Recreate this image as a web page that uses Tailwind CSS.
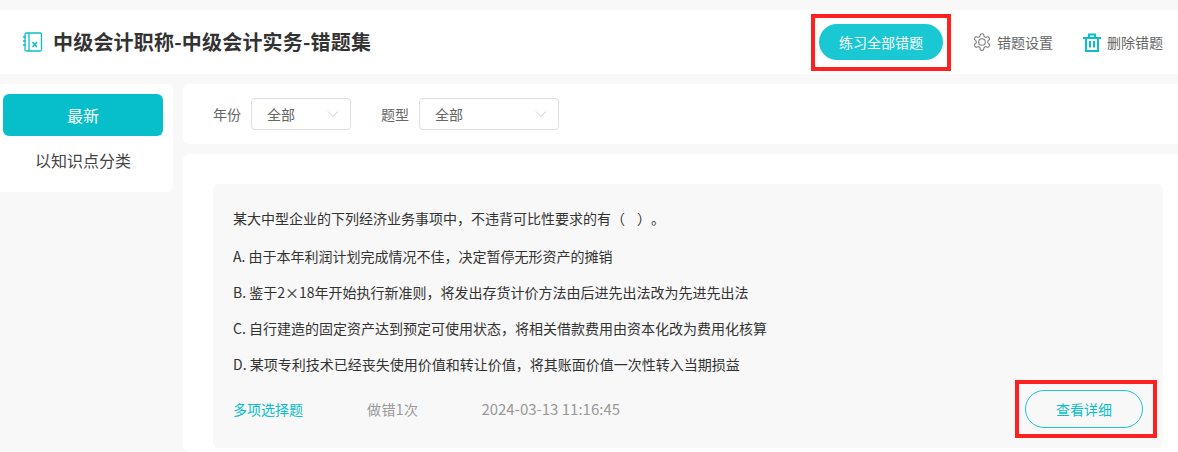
<!DOCTYPE html>
<html lang="zh">
<head>
<meta charset="utf-8">
<script src="https://cdn.jsdelivr.net/npm/@tailwindcss/browser@4"></script>
</head>
<body class="w-[1178px] h-[452px] overflow-hidden bg-[#f8f8f8] font-['Noto_Sans_CJK_SC','Noto_Sans',sans-serif] text-[#333] [text-spacing-trim:space-all]">
<div class="pt-[10px]">
  <header class="h-16 bg-white flex items-center pl-[23px] pr-[15px]">
    <svg class="w-5 h-5 text-[#0bbfca]" viewBox="0 0 20 20" fill="none" stroke="currentColor" stroke-width="1.3">
      <rect x="2" y="1" width="16.5" height="18" rx="1.5"/>
      <path d="M6 1v18" />
      <path d="M0 5h3M0 9h3M0 13h3" />
      <path d="M9.5 10l4.5 5M14 10l-4.5 5" stroke-width="1.6"/>
    </svg>
    <h1 class="ml-[10px] text-[20px] leading-none font-bold text-[#333] tracking-[0.2px]">中级会计职称-中级会计实务-错题集</h1>
    <div class="ml-auto flex items-center">
      <div class="relative">
        <button class="block w-[124px] h-9 rounded-full bg-[#19c8d2] text-white text-[14px]">练习全部错题</button>
        <div class="absolute left-[-8px] top-[-10px] w-[140px] h-[57px] border-4 border-[#ff2020]"></div>
      </div>
      <div class="ml-[29px] flex items-center text-[14px] text-[#666]">
        <svg class="w-5 h-5 text-[#777]" viewBox="0 0 24 24" fill="none" stroke="currentColor" stroke-width="1.25" stroke-linejoin="round">
          <path d="M12.22 2h-.44a2 2 0 0 0-2 2v.18a2 2 0 0 1-1 1.73l-.43.25a2 2 0 0 1-2 0l-.15-.08a2 2 0 0 0-2.73.73l-.22.38a2 2 0 0 0 .73 2.73l.15.1a2 2 0 0 1 1 1.72v.51a2 2 0 0 1-1 1.74l-.15.09a2 2 0 0 0-.73 2.73l.22.38a2 2 0 0 0 2.73.73l.15-.08a2 2 0 0 1 2 0l.43.25a2 2 0 0 1 1 1.73V20a2 2 0 0 0 2 2h.44a2 2 0 0 0 2-2v-.18a2 2 0 0 1 1-1.73l.43-.25a2 2 0 0 1 2 0l.15.08a2 2 0 0 0 2.73-.73l.22-.39a2 2 0 0 0-.73-2.73l-.15-.08a2 2 0 0 1-1-1.74v-.5a2 2 0 0 1 1-1.74l.15-.09a2 2 0 0 0 .73-2.73l-.22-.38a2 2 0 0 0-2.73-.73l-.15.08a2 2 0 0 1-2 0l-.43-.25a2 2 0 0 1-1-1.73V4a2 2 0 0 0-2-2z"/>
          <circle cx="12" cy="12" r="4"/>
        </svg>
        <span class="ml-[5px]">错题设置</span>
      </div>
      <div class="ml-[30px] flex items-center text-[14px] text-[#666]">
        <svg class="w-[18px] h-[19px] text-[#0bbfca]" viewBox="0 0 18 19" fill="none" stroke="currentColor" stroke-width="2">
          <path d="M0 5h18M6 5V1.5h6V5M3 5v13h12V5M7 8v6.5M11 8v6.5"/>
        </svg>
        <span class="ml-[6px]">删除错题</span>
      </div>
    </div>
  </header>
  <div class="mt-[10px] flex gap-[10px]">
    <aside class="w-[173px] h-[108px] shrink-0 bg-white rounded-r-md pt-[10px] pl-[3px]">
      <div class="h-[42px] w-[160px] rounded-md bg-[#07bfca] text-white text-[16px] flex items-center justify-center">最新</div>
      <div class="mt-[3px] w-[160px] h-[42px] text-[16px] text-[#444] flex items-center justify-center">以知识点分类</div>
    </aside>
    <main class="flex-1 min-w-0">
      <div class="h-[60px] bg-white rounded-l-md flex items-center pl-[30px] text-[14px] text-[#666]">
        <span>年份</span>
        <div class="ml-[10px] w-[100px] h-8 border border-[#dcdfe6] rounded flex items-center justify-between pl-[15px] pr-[11px]">
          <span>全部</span>
          <svg class="w-3 h-2 text-[#c8ccd4]" viewBox="0 0 12 8" fill="none" stroke="currentColor"><path d="M1 1.5l5 5 5-5"/></svg>
        </div>
        <span class="ml-[30px]">题型</span>
        <div class="ml-[10px] w-[140px] h-8 border border-[#dcdfe6] rounded flex items-center justify-between pl-[15px] pr-[11px]">
          <span>全部</span>
          <svg class="w-3 h-2 text-[#c8ccd4]" viewBox="0 0 12 8" fill="none" stroke="currentColor"><path d="M1 1.5l5 5 5-5"/></svg>
        </div>
      </div>
      <div class="mt-[10px] h-[298px] bg-white rounded-l-md pl-[30px] pr-[15px] pt-[30px]">
        <article class="h-[264px] bg-[#f8f8f8] rounded-md pl-5 pr-5 pt-[21px] text-[14px] text-[#333]">
          <p class="h-[27px] leading-[27px]">某大中型企业的下列经济业务事项中，不违背可比性要求的有（<span class="inline-block w-[12px]"></span>）。</p>
          <div class="mt-[11px] flex flex-col gap-[9px]">
            <p class="h-[27px] leading-[27px]">A. 由于本年利润计划完成情况不佳，决定暂停无形资产的摊销</p>
            <p class="h-[27px] leading-[27px]">B. 鉴于2×18年开始执行新准则，将发出存货计价方法由后进先出法改为先进先出法</p>
            <p class="h-[27px] leading-[27px]">C. 自行建造的固定资产达到预定可使用状态，将相关借款费用由资本化改为费用化核算</p>
            <p class="h-[27px] leading-[27px]">D. 某项专利技术已经丧失使用价值和转让价值，将其账面价值一次性转入当期损益</p>
          </div>
          <div class="mt-[12px] flex items-center h-[38px]">
            <span class="text-[#0bbfca]">多项选择题</span>
            <span class="ml-[64px] text-[#999] tracking-[0.4px]">做错1次</span>
            <span class="ml-[63px] text-[#999] text-[15px]">2024-03-13 11:16:45</span>
            <div class="relative ml-auto">
              <button class="block w-[118px] h-[38px] rounded-full border border-[#19c8d2] text-[#0bbfca] text-[14px]">查看详细</button>
              <div class="absolute left-[-10px] top-[-10px] w-[142px] h-[58px] border-4 border-[#ff2020]"></div>
            </div>
          </div>
        </article>
      </div>
    </main>
  </div>
</div>
</body>
</html>
